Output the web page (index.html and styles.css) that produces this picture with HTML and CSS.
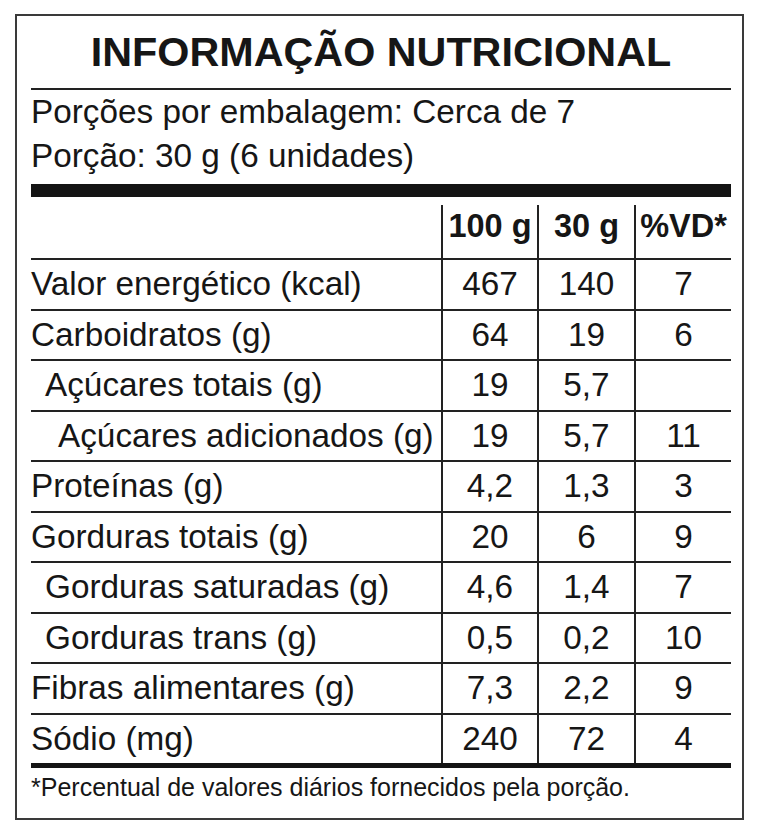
FILE: index.html
```html
<!DOCTYPE html>
<html lang="pt-BR">
<head>
<meta charset="utf-8">
<title>Informação Nutricional</title>
<link rel="stylesheet" href="styles.css">
</head>
<body>
<div class="label">
  <h1 class="title">INFORMAÇÃO NUTRICIONAL</h1>
  <div class="serving">
    <p class="serving-line">Porções por embalagem: Cerca de 7</p>
    <p class="serving-line">Porção: 30 g (6 unidades)</p>
  </div>
  <div class="bar"></div>
  <div class="table">
    <div class="cell head name"></div>
    <div class="cell head col">100 g</div>
    <div class="cell head col">30 g</div>
    <div class="cell head col">%VD*</div>

    <div class="cell name">Valor energético (kcal)</div>
    <div class="cell col">467</div>
    <div class="cell col">140</div>
    <div class="cell col">7</div>

    <div class="cell name">Carboidratos (g)</div>
    <div class="cell col">64</div>
    <div class="cell col">19</div>
    <div class="cell col">6</div>

    <div class="cell name indent1">Açúcares totais (g)</div>
    <div class="cell col">19</div>
    <div class="cell col">5,7</div>
    <div class="cell col"></div>

    <div class="cell name indent2">Açúcares adicionados (g)</div>
    <div class="cell col">19</div>
    <div class="cell col">5,7</div>
    <div class="cell col">11</div>

    <div class="cell name">Proteínas (g)</div>
    <div class="cell col">4,2</div>
    <div class="cell col">1,3</div>
    <div class="cell col">3</div>

    <div class="cell name">Gorduras totais (g)</div>
    <div class="cell col">20</div>
    <div class="cell col">6</div>
    <div class="cell col">9</div>

    <div class="cell name indent1">Gorduras saturadas (g)</div>
    <div class="cell col">4,6</div>
    <div class="cell col">1,4</div>
    <div class="cell col">7</div>

    <div class="cell name indent1">Gorduras trans (g)</div>
    <div class="cell col">0,5</div>
    <div class="cell col">0,2</div>
    <div class="cell col">10</div>

    <div class="cell name">Fibras alimentares (g)</div>
    <div class="cell col">7,3</div>
    <div class="cell col">2,2</div>
    <div class="cell col">9</div>

    <div class="cell name">Sódio (mg)</div>
    <div class="cell col">240</div>
    <div class="cell col">72</div>
    <div class="cell col">4</div>
  </div>
  <p class="note">*Percentual de valores diários fornecidos pela porção.</p>
</div>
</body>
</html>
```
FILE: styles.css
```css
html, body {
  margin: 0;
  padding: 0;
  background: #fff;
}

body {
  font-family: "Liberation Sans", Arial, sans-serif;
  color: #161616;
}

.label {
  box-sizing: border-box;
  width: 729px;
  margin: 14px 0 0 15px;
  border: 2px solid #3a3a3a;
  padding: 0 11px 16px 14px;
}

.title {
  margin: 0;
  padding: 12px 0;
  font-size: 41.3px;
  line-height: 48px;
  font-weight: bold;
  text-align: center;
  border-bottom: 2px solid #222;
}

.serving {
  padding-bottom: 6px;
}

.serving-line {
  margin: 0;
  font-size: 33.3px;
  line-height: 44px;
}

.bar {
  height: 13px;
  background: #141414;
  margin-bottom: 8px;
}

.table {
  display: grid;
  grid-template-columns: 410px 96px 97px 97px;
  grid-template-rows: 53px;
  grid-auto-rows: 50.5px;
  border-bottom: 5px solid #141414;
}

.cell {
  box-sizing: border-box;
  font-size: 33.3px;
  display: flex;
  align-items: center;
  border-top: 2px solid #222;
  white-space: nowrap;
}

.cell.head {
  border-top: 0;
  font-weight: bold;
  font-size: 32.5px;
  padding-bottom: 10px;
}

.col {
  justify-content: center;
  border-left: 2px solid #222;
}

.indent1 {
  padding-left: 14px;
}

.indent2 {
  padding-left: 27px;
}

.note {
  margin: 4px 0 0;
  font-size: 25px;
  line-height: 30px;
}
```
